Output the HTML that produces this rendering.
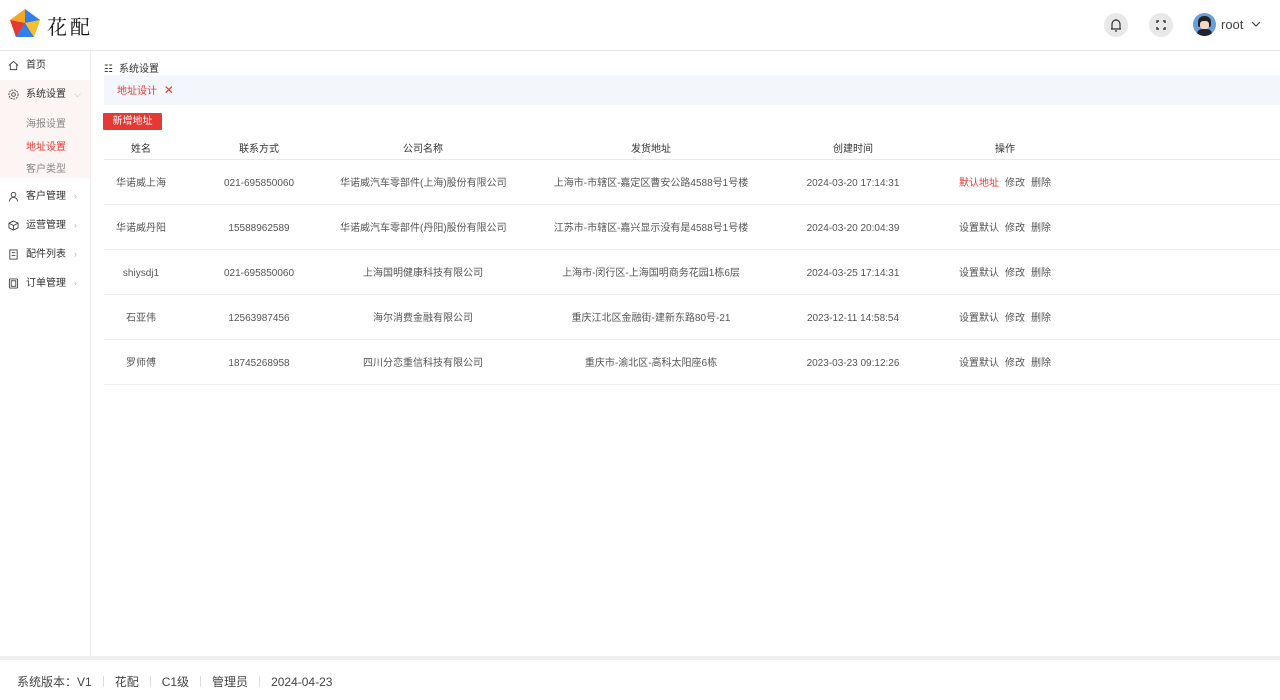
<!DOCTYPE html>
<html><head><meta charset="utf-8"><style>
*{margin:0;padding:0;box-sizing:border-box}
body{width:1280px;height:700px;overflow:hidden;background:#fff;font-family:"Liberation Sans","Noto Sans CJK SC",sans-serif;color:#333;position:relative}
.hd{position:absolute;left:0;top:0;width:1280px;height:51px;border-bottom:1px solid #e6e6e6}
.logo{position:absolute;left:9px;top:8px}
.brand{position:absolute;left:47px;top:11px;font-size:20px;font-family:"Noto Serif CJK SC",serif;letter-spacing:3px;color:#111}
.ic{position:absolute;top:13px;width:24px;height:24px;border-radius:50%;background:#e8e8e8}
.side{position:absolute;left:0;top:51px;width:91px;height:605px;border-right:1px solid #eee}
.mi{position:absolute;left:0;width:90px;height:29px;font-size:10px;color:#333;line-height:29px;padding-left:26px}
.mi svg{position:absolute;left:8px;top:9px}
.mi .ar{position:absolute;left:74px;color:#bbb;font-size:9px}
.sub{position:absolute;left:0;top:57px;width:90px;height:70px;background:#fdf4f4}
.sub div{position:absolute;left:26px;font-size:10px;color:#888}
table{position:absolute;left:104px;top:136px;width:1176px;border-collapse:collapse;font-size:10px;table-layout:fixed}
th{font-weight:normal;color:#333;height:23px;border-bottom:1px solid #e8e8e8;text-align:center;white-space:nowrap}
td{height:45px;border-bottom:1px solid #eee;text-align:center;color:#555;white-space:nowrap;padding:0;vertical-align:middle}
td>div{height:14px;line-height:14px;overflow:visible;position:relative;top:2px}
.op span{margin:0 3px}
.foot{position:absolute;left:0;top:656px;width:1280px;height:44px;border-top:4px solid #eee;font-size:12px;color:#444;padding:13px 0 0 17px;white-space:nowrap}
.foot i{display:inline-block;width:1px;height:11px;background:#ddd;margin:0 11px;vertical-align:-1px}
</style></head><body>
<div class="hd">
<svg class="logo" width="32" height="30" viewBox="0 0 32 30"><polygon points="16,1 31,12 25,29 7,29 1,12" fill="#f5a623"/><polygon points="16,1 31,12 16,15" fill="#2f80ed"/><polygon points="1,12 16,15 7,29" fill="#e53935"/><polygon points="16,15 25,29 7,29" fill="#2f80ed"/><polygon points="16,15 31,12 25,29" fill="#f5c030"/></svg>
<div class="brand">花配</div>
<div class="ic" style="left:1104px"><svg width="24" height="24" viewBox="0 0 24 24" fill="none" stroke="#333" stroke-width="1.2"><path d="M8 16V11a4 4 0 0 1 8 0v5H7h10M11 18h2M12 6v1"/></svg></div>
<div class="ic" style="left:1149px"><svg width="24" height="24" viewBox="0 0 24 24" fill="none" stroke="#333" stroke-width="1.4"><path d="M8 10V8h2M14 8h2v2M16 14v2h-2M10 16H8v-2"/></svg></div>
<div style="position:absolute;left:1193px;top:13px;width:23px;height:23px;border-radius:50%;background:#6a9fd8;overflow:hidden"><div style="position:absolute;left:5px;top:3px;width:13px;height:11px;background:#222;border-radius:6px 6px 2px 2px"></div><div style="position:absolute;left:7px;top:8px;width:9px;height:8px;background:#f3d9c4;border-radius:3px"></div><div style="position:absolute;left:4px;top:16px;width:15px;height:8px;background:#223;border-radius:5px 5px 0 0"></div></div>
<div style="position:absolute;left:1221px;top:17px;font-size:13px;color:#444">root</div>
<svg style="position:absolute;left:1251px;top:21px" width="10" height="7" viewBox="0 0 10 7" fill="none" stroke="#444" stroke-width="1.2"><path d="M1 1l4 4 4-4"/></svg>
</div>
<div class="side">
<div class="mi" style="top:0"><svg width="11" height="11" viewBox="0 0 12 12" fill="none" stroke="#444"><path d="M1 6L6 1.5 11 6M2.5 5v5.5h7V5"/></svg>首页</div>
<div class="mi" style="top:29px;background:#fdf4f4"><svg width="11" height="11" viewBox="0 0 12 12" fill="none" stroke="#444"><circle cx="6" cy="6" r="2"/><circle cx="6" cy="6" r="5" stroke-dasharray="2 1"/></svg>系统设置<span class="ar">⌵</span></div>
<div class="sub"><div style="top:7px">海报设置</div><div style="top:30px;color:#e53935">地址设置</div><div style="top:52px">客户类型</div></div>
<div class="mi" style="top:131px"><svg width="11" height="11" viewBox="0 0 12 12" fill="none" stroke="#444"><circle cx="6" cy="4" r="2.5"/><path d="M1.5 11.5a4.5 4.5 0 0 1 9 0"/></svg>客户管理<span class="ar">›</span></div>
<div class="mi" style="top:160px"><svg width="11" height="11" viewBox="0 0 12 12" fill="none" stroke="#444"><path d="M6 1l5 2.5v5L6 11 1 8.5v-5zM1 3.5L6 6l5-2.5M6 6v5"/></svg>运营管理<span class="ar">›</span></div>
<div class="mi" style="top:189px"><svg width="11" height="11" viewBox="0 0 12 12" fill="none" stroke="#444"><rect x="2" y="1" width="8" height="10"/><path d="M4 4h4M4 7h4"/></svg>配件列表<span class="ar">›</span></div>
<div class="mi" style="top:218px"><svg width="11" height="11" viewBox="0 0 12 12" fill="none" stroke="#444"><rect x="1.5" y="1" width="9" height="10" rx="1"/><rect x="3.5" y="3" width="5" height="6"/></svg>订单管理<span class="ar">›</span></div>
</div>
<div style="position:absolute;left:104px;top:60px;font-size:10px;color:#333"><span style="font-size:10px;margin-right:6px">☷</span>系统设置</div>
<div style="position:absolute;left:104px;top:75px;width:1176px;height:30px;background:#f3f6fb;font-size:10px;color:#e53935;line-height:30px;padding-left:13px">地址设计 <span style="margin-left:4px;font-size:12px">✕</span></div>
<div style="position:absolute;left:103px;top:113px;width:59px;height:17px;background:#e53935;color:#fff;font-size:10px;line-height:17px;text-align:center;border-radius:1px">新增地址</div>
<table>
<colgroup><col style="width:74px"><col style="width:162px"><col style="width:166px"><col style="width:290px"><col style="width:114px"><col style="width:190px"><col></colgroup>
<tr><th>姓名</th><th>联系方式</th><th>公司名称</th><th>发货地址</th><th>创建时间</th><th>操作</th><th></th></tr>
<tr><td><div>华诺威上海</div></td><td><div>021-695850060</div></td><td><div>华诺威汽车零部件(上海)股份有限公司</div></td><td><div>上海市-市辖区-嘉定区曹安公路4588号1号楼</div></td><td><div>2024-03-20 17:14:31</div></td><td class="op"><div><span style="color:#e53935">默认地址</span><span>修改</span><span>删除</span></div></td><td></td></tr>
<tr><td><div>华诺威丹阳</div></td><td><div>15588962589</div></td><td><div>华诺威汽车零部件(丹阳)股份有限公司</div></td><td><div>江苏市-市辖区-嘉兴显示没有是4588号1号楼</div></td><td><div>2024-03-20 20:04:39</div></td><td class="op"><div><span>设置默认</span><span>修改</span><span>删除</span></div></td><td></td></tr>
<tr><td><div>shiysdj1</div></td><td><div>021-695850060</div></td><td><div>上海国明健康科技有限公司</div></td><td><div>上海市-闵行区-上海国明商务花园1栋6层</div></td><td><div>2024-03-25 17:14:31</div></td><td class="op"><div><span>设置默认</span><span>修改</span><span>删除</span></div></td><td></td></tr>
<tr><td><div>石亚伟</div></td><td><div>12563987456</div></td><td><div>海尔消费金融有限公司</div></td><td><div>重庆江北区金融街-建新东路80号-21</div></td><td><div>2023-12-11 14:58:54</div></td><td class="op"><div><span>设置默认</span><span>修改</span><span>删除</span></div></td><td></td></tr>
<tr><td><div>罗师傅</div></td><td><div>18745268958</div></td><td><div>四川分恋重信科技有限公司</div></td><td><div>重庆市-渝北区-高科太阳座6栋</div></td><td><div>2023-03-23 09:12:26</div></td><td class="op"><div><span>设置默认</span><span>修改</span><span>删除</span></div></td><td></td></tr>
</table>
<div class="foot">系统版本：V1<i></i>花配<i></i>C1级<i></i>管理员<i></i>2024-04-23</div>
</body></html>
